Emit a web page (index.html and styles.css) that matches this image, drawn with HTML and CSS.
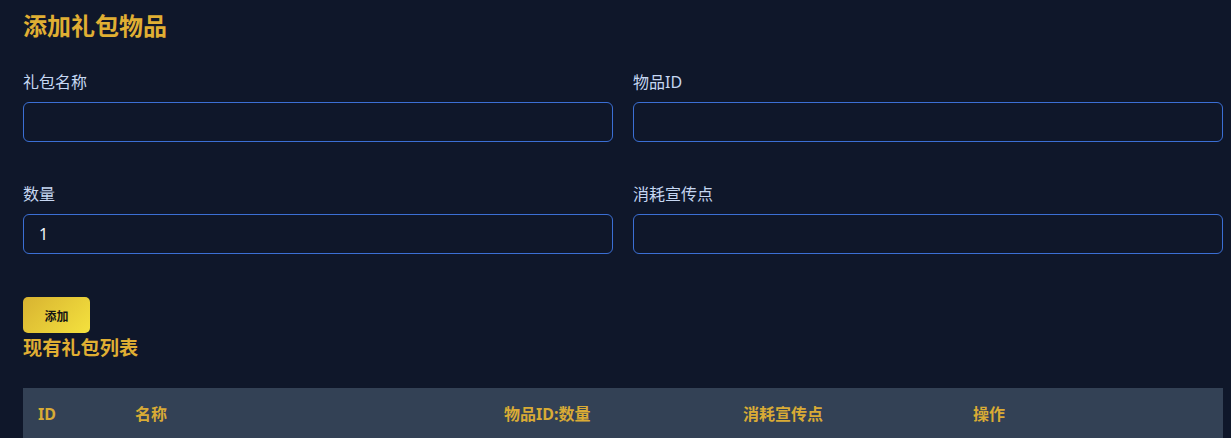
FILE: index.html
```html
<!DOCTYPE html>
<html lang="zh-CN">
<head>
<meta charset="utf-8">
<title>添加礼包物品</title>
<link rel="stylesheet" href="styles.css">
</head>
<body>
<main class="page">
  <h2 class="title">添加礼包物品</h2>
  <form class="form">
    <div class="grid">
      <div class="field">
        <label class="label">礼包名称</label>
        <input class="input" type="text">
      </div>
      <div class="field">
        <label class="label">物品ID</label>
        <input class="input" type="text">
      </div>
      <div class="field">
        <label class="label">数量</label>
        <input class="input" type="text" value="1">
      </div>
      <div class="field">
        <label class="label">消耗宣传点</label>
        <input class="input" type="text">
      </div>
    </div>
    <button class="btn" type="button">添加</button>
  </form>
  <h3 class="subtitle">现有礼包列表</h3>
  <table class="table">
    <thead>
      <tr>
        <th class="c-id">ID</th>
        <th class="c-name">名称</th>
        <th class="c-items">物品ID:数量</th>
        <th class="c-cost">消耗宣传点</th>
        <th class="c-op">操作</th>
      </tr>
    </thead>
  </table>
</main>
</body>
</html>
```

FILE: styles.css
```css
* { box-sizing: border-box; }
html, body {
  margin: 0;
  padding: 0;
  background: #0f172a;
}
body {
  font-family: "Noto Sans", "Noto Sans CJK SC", sans-serif;
  color: #e2e8f0;
}
.page {
  width: 1200px;
  margin-left: 23px;
  padding-top: 10px;
}
.title {
  margin: 0 0 28px;
  font-size: 24px;
  line-height: 32px;
  font-weight: 700;
  color: #e0af33;
}
.grid {
  display: grid;
  grid-template-columns: 1fr 1fr;
  column-gap: 20px;
  row-gap: 40px;
}
.field {
  display: flex;
  flex-direction: column;
}
.label {
  font-size: 16px;
  line-height: 24px;
  color: #c6d7f2;
  margin-bottom: 8px;
}
.input {
  height: 40px;
  width: 100%;
  border: 1px solid #3b6fd4;
  border-radius: 6px;
  background: #0f172a;
  color: #f1f5f9;
  font-family: "Noto Sans", "Noto Sans CJK SC", sans-serif;
  font-size: 16px;
  padding: 0 15px;
  outline: none;
}
.btn {
  display: block;
  margin-top: 43px;
  width: 67px;
  height: 36px;
  border: none;
  border-radius: 5px;
  background: linear-gradient(135deg, #d8b331, #f4e23e);
  color: #141414;
  font-family: "Noto Sans CJK SC", sans-serif;
  font-size: 12px;
  font-weight: 700;
  padding: 0;
}
.subtitle {
  margin: 1px 0 26px;
  font-size: 19.2px;
  line-height: 28px;
  font-weight: 700;
  color: #e0af33;
}
.table {
  width: 1200px;
  border-collapse: collapse;
  table-layout: fixed;
}
.table th {
  background: #334155;
  color: #d9ab35;
  font-size: 16px;
  line-height: 24px;
  font-weight: 700;
  text-align: left;
  padding: 14px 15px;
}
.c-id { width: 97px; }
.c-name { width: 369px; }
.c-items { width: 239px; }
.c-cost { width: 230px; }
.c-op { width: 265px; }
```
